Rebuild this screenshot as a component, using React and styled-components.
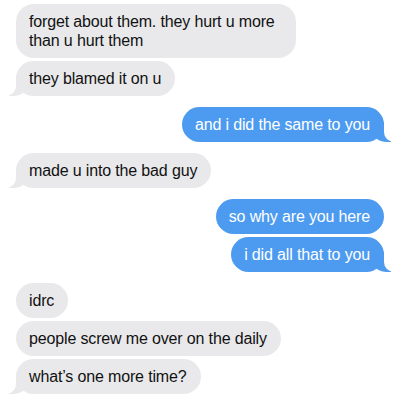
import React from 'react';
import styled, { createGlobalStyle, css } from 'styled-components';

const GlobalStyle = createGlobalStyle`
  body {
    margin: 0;
    background: #ffffff;
    font-family: "Liberation Sans", Arial, sans-serif;
  }
`;

const Thread = styled.div`
  width: 400px;
  height: 400px;
  box-sizing: border-box;
  padding: 4px 16px 0 16px;
  display: flex;
  flex-direction: column;
  gap: 11px;
  overflow: hidden;
`;

const Group = styled.div`
  display: flex;
  flex-direction: column;
  align-items: ${p => (p.$me ? 'flex-end' : 'flex-start')};
  gap: 3px;
`;

const Bubble = styled.div`
  position: relative;
  box-sizing: border-box;
  max-width: 280px;
  padding: 8px 14px 8px 13px;
  border-radius: 18px;
  font-size: 16px;
  line-height: 19px;
  letter-spacing: -0.15px;
  color: ${p => (p.$me ? '#ffffff' : '#111111')};
  background: ${p => (p.$me ? '#4d9bf0' : '#e9e9eb')};

  ${p => p.$tail && !p.$me && css`
    &::before {
      content: "";
      position: absolute;
      bottom: 0;
      left: -7px;
      width: 20px;
      height: 20px;
      background: #e9e9eb;
      border-bottom-right-radius: 16px 14px;
    }
    &::after {
      content: "";
      position: absolute;
      bottom: 0;
      left: -26px;
      width: 26px;
      height: 20px;
      background: #ffffff;
      border-bottom-right-radius: 10px;
    }
  `}

  ${p => p.$tail && p.$me && css`
    &::before {
      content: "";
      position: absolute;
      bottom: 0;
      right: -7px;
      width: 20px;
      height: 20px;
      background: #4d9bf0;
      border-bottom-left-radius: 16px 14px;
    }
    &::after {
      content: "";
      position: absolute;
      bottom: 0;
      right: -26px;
      width: 26px;
      height: 20px;
      background: #ffffff;
      border-bottom-left-radius: 10px;
    }
  `}
`;

const Text = styled.span`
  position: relative;
  z-index: 1;
`;

const groups = [
  { me: false, lines: ['forget about them. they hurt u more than u hurt them', 'they blamed it on u'] },
  { me: true, lines: ['and i did the same to you'] },
  { me: false, lines: ['made u into the bad guy'] },
  { me: true, lines: ['so why are you here', 'i did all that to you'] },
  { me: false, lines: ['idrc', 'people screw me over on the daily', 'what\u2019s one more time?'] },
];

export default function App() {
  return (
    <>
      <GlobalStyle />
      <Thread>
        {groups.map((g, i) => (
          <Group key={i} $me={g.me}>
            {g.lines.map((line, j) => (
              <Bubble key={j} $me={g.me} $tail={j === g.lines.length - 1}>
                <Text>{line}</Text>
              </Bubble>
            ))}
          </Group>
        ))}
      </Thread>
    </>
  );
}
